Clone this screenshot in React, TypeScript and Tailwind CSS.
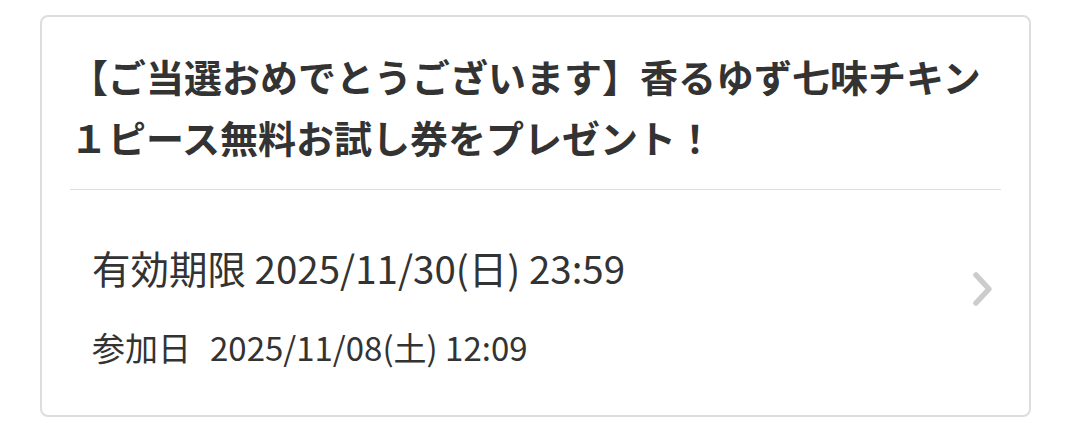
export default function App() {
  return (
    <div
      className="min-h-screen bg-white pl-[40px] pt-[15px]"
      style={{ fontFamily: '"Noto Sans CJK JP", "Noto Sans", sans-serif' }}
    >
      <div className="w-[991px] h-[402px] rounded-lg border-2 border-[#dddddd] bg-white px-[28px]">
        <h1 className="pt-[28px] pb-[22px] text-[38px] font-bold leading-[61px] text-[#333333]">
          【ご当選おめでとうございます】香るゆず七味チキン１ピース無料お試し券をプレゼント！
        </h1>
        <div className="h-px bg-[#dddddd]" />
        <div className="flex items-start pl-[22px] pr-[5px] pt-[49px]">
          <div className="flex-1 text-[#333333]">
            <p className="text-[38.5px] leading-[57px]">有効期限 2025/11/30(日) 23:59</p>
            <p className="mt-[26px] text-[33px] leading-[50px]">
              参加日<span className="ml-[19px]">2025/11/08(土) 12:09</span>
            </p>
          </div>
          <svg width="26" height="40" viewBox="0 0 26 40" className="mt-[30px]">
            <path d="M6 6 L19 20 L6 34" fill="none" stroke="#cccccc" strokeWidth="5.5" strokeLinecap="round" strokeLinejoin="round" />
          </svg>
        </div>
      </div>
    </div>
  )
}
